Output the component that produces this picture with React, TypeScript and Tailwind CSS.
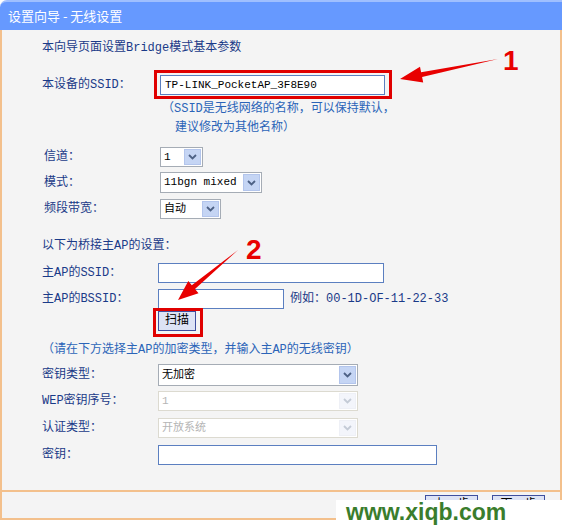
import React from 'react';

const LABEL = 'text-[#1a3a88]';
const HELP = 'text-[#2b64b8]';

function Chevron({ disabled }: { disabled?: boolean }) {
  return (
    <svg width="9" height="6" viewBox="0 0 9 6">
      <path d="M1 1 L4.5 4.5 L8 1" fill="none" stroke={disabled ? '#c4cbd6' : '#4d6185'} strokeWidth="1.8" />
    </svg>
  );
}

function Select({ value, w, h = 20, disabled }: { value: string; w: number; h?: number; disabled?: boolean }) {
  return (
    <div
      className={`flex items-stretch bg-white border ${disabled ? 'border-[#dcdad0]' : 'border-[#a5acb5]'}`}
      style={{ width: w, height: h }}
    >
      <span
        className={`flex-1 flex items-center pl-[3px] text-[11px] leading-none whitespace-nowrap overflow-hidden ${
          disabled ? 'text-[#b5b5b5]' : 'text-black'
        }`}
      >
        {value}
      </span>
      <span
        className={`w-[17px] shrink-0 m-[1px] flex items-center justify-center border ${
          disabled ? 'bg-[#f3f5fb] border-[#eef0f6]' : 'bg-[#c5d5f4] border-[#b3c5ec]'
        }`}
      >
        <Chevron disabled={disabled} />
      </span>
    </div>
  );
}

function Input({ w, value }: { w: number; value?: string }) {
  return (
    <div
      className="h-[20px] bg-white border border-[#5b7fc0] flex items-center pl-[4px] text-[11px] text-black whitespace-nowrap"
      style={{ width: w }}
    >
      {value}
    </div>
  );
}

function Row({ label, top, h = 20, children }: { label: string; top: number; h?: number; children?: React.ReactNode }) {
  return (
    <div className="flex items-center" style={{ marginTop: top, height: h }}>
      <span className={`w-[116px] ${LABEL}`}>{label}</span>
      {children}
    </div>
  );
}

export default function App() {
  return (
    <div className="relative w-[565px] h-[525px] bg-white overflow-hidden text-[12px] font-['Liberation_Mono','Noto_Sans_CJK_SC',monospace]">
      <div className="w-[562px] h-[522px] flex flex-col">
        <div className="h-[30px] bg-[#6699ff] border-t-2 border-[#9fbfff] rounded-tl-[7px] flex items-center pl-[8px] text-white text-[13px] font-['Noto_Sans_CJK_SC',sans-serif]">
          设置向导 - 无线设置
        </div>

        <div className="h-[462px] bg-[#f4f4f4] border-l-2 border-r-2 border-b-2 border-[#f3c08c] pl-[40px] flex flex-col">
          <div className={`mt-[8px] h-[20px] flex items-center ${LABEL}`}>本向导页面设置Bridge模式基本参数</div>

          <div className="flex items-center mt-[12px] h-[29px]">
            <span className={`w-[112px] ${LABEL}`}>本设备的SSID：</span>
            <div className="border-[3px] border-[#e00000] pt-[2px] pb-[1px] pl-[3px] pr-[4px]">
              <Input w={225} value="TP-LINK_PocketAP_3F8E90" />
            </div>
          </div>
          <div className={`mt-[1px] h-[18px] flex items-center pl-[120px] ${HELP}`}>（SSID是无线网络的名称，可以保持默认，</div>
          <div className={`mt-[1px] h-[18px] flex items-center pl-[133px] ${HELP}`}>建议修改为其他名称）</div>

          <div className="pl-[2px]">
            <Row label="信道：" top={10}>
              <Select value="1" w={43} />
            </Row>
            <Row label="模式：" top={5} h={21}>
              <Select value="11bgn mixed" w={102} h={21} />
            </Row>
            <Row label="频段带宽：" top={6}>
              <Select value="自动" w={61} />
            </Row>
          </div>

          <div className={`mt-[17px] h-[20px] flex items-center ${LABEL}`}>以下为桥接主AP的设置：</div>
          <Row label="主AP的SSID：" top={7}>
            <Input w={226} />
          </Row>
          <Row label="主AP的BSSID：" top={6}>
            <Input w={126} />
            <span className={`ml-[6px] ${LABEL}`}>例如：00-1D-OF-11-22-33</span>
          </Row>
          <div className="-mt-[1px] h-[29px] pl-[111px] flex">
            <div className="border-[3px] border-[#e00000] w-[50px] pl-[2px]">
              <button className="w-[38px] h-[20px] bg-[#dde3f5] border border-[#3f4f9f] text-black text-[12px] leading-none">
                扫描
              </button>
            </div>
          </div>
          <div className={`mt-[3px] h-[20px] flex items-center ${HELP}`}>（请在下方选择主AP的加密类型，并输入主AP的无线密钥）</div>

          <Row label="密钥类型：" top={4} h={22}>
            <Select value="无加密" w={200} h={22} />
          </Row>
          <Row label="WEP密钥序号：" top={5}>
            <Select value="1" w={200} disabled />
          </Row>
          <Row label="认证类型：" top={7}>
            <Select value="开放系统" w={200} disabled />
          </Row>
          <Row label="密钥：" top={7}>
            <Input w={279} />
          </Row>
        </div>

        <div className="h-[28px] bg-[#f4f4f4] border-l-2 border-r-2 border-b-2 border-[#f3c08c] flex justify-end gap-[14px] pr-[15px] pt-[3px]">
          <button className="w-[53px] h-[20px] bg-[#dde3f5] border border-[#3f4f9f] text-black text-[12px] leading-none">上一步</button>
          <button className="w-[53px] h-[20px] bg-[#dde3f5] border border-[#3f4f9f] text-black text-[12px] leading-none">下一步</button>
        </div>
      </div>

      {/* annotations */}
      <svg className="absolute left-0 top-0" width="565" height="525">
        <polygon points="400,79 423.2,82.4 422.1,77.05 498,59 421.1,72.15 420,66.8" fill="#e80000" />
        <polygon points="178,300 198.5,293.3 195,289.1 238,250 191.8,285.3 188.3,281.1" fill="#e80000" />
      </svg>
      <span className="absolute left-[503px] top-[47px] text-[28px] font-bold leading-none text-[#e80000] font-['Liberation_Sans',sans-serif]">1</span>
      <span className="absolute left-[246px] top-[236px] text-[28px] font-bold leading-none text-[#e80000] font-['Liberation_Sans',sans-serif]">2</span>

      <div className="absolute left-[336px] top-[500px] w-[229px] h-[25px] bg-white pl-[10px] text-[23px] leading-[25px] font-bold text-[#3a7d2c] font-['Liberation_Sans',sans-serif]">
        www.xiqb.com
      </div>
    </div>
  );
}
